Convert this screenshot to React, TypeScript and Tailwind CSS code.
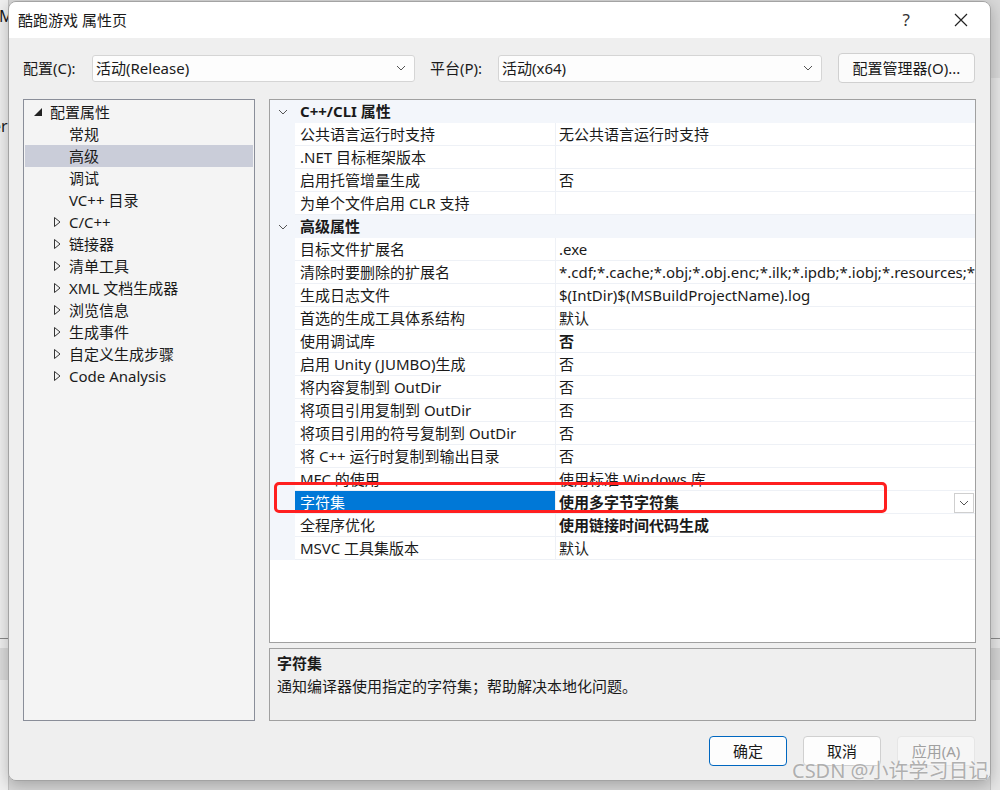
import React from "react";

const font = {
  fontFamily: '"Noto Sans", "Noto Sans CJK SC", sans-serif',
};

type TreeItem = { label: string; kind: "root" | "leaf" | "closed"; selected?: boolean };

const treeData: TreeItem[] = [
  { label: "配置属性", kind: "root" },
  { label: "常规", kind: "leaf" },
  { label: "高级", kind: "leaf", selected: true },
  { label: "调试", kind: "leaf" },
  { label: "VC++ 目录", kind: "leaf" },
  { label: "C/C++", kind: "closed" },
  { label: "链接器", kind: "closed" },
  { label: "清单工具", kind: "closed" },
  { label: "XML 文档生成器", kind: "closed" },
  { label: "浏览信息", kind: "closed" },
  { label: "生成事件", kind: "closed" },
  { label: "自定义生成步骤", kind: "closed" },
  { label: "Code Analysis", kind: "closed" },
];

type Row = { name: string; value?: string; bold?: boolean; category?: boolean; selected?: boolean };

const rows: Row[] = [
  { name: "C++/CLI 属性", category: true },
  { name: "公共语言运行时支持", value: "无公共语言运行时支持" },
  { name: ".NET 目标框架版本", value: "" },
  { name: "启用托管增量生成", value: "否" },
  { name: "为单个文件启用 CLR 支持", value: "" },
  { name: "高级属性", category: true },
  { name: "目标文件扩展名", value: ".exe" },
  { name: "清除时要删除的扩展名", value: "*.cdf;*.cache;*.obj;*.obj.enc;*.ilk;*.ipdb;*.iobj;*.resources;*.tlb;*.tli;*.tlh;*.tmp;*.rsp" },
  { name: "生成日志文件", value: "$(IntDir)$(MSBuildProjectName).log" },
  { name: "首选的生成工具体系结构", value: "默认" },
  { name: "使用调试库", value: "否", bold: true },
  { name: "启用 Unity (JUMBO)生成", value: "否" },
  { name: "将内容复制到 OutDir", value: "否" },
  { name: "将项目引用复制到 OutDir", value: "否" },
  { name: "将项目引用的符号复制到 OutDir", value: "否" },
  { name: "将 C++ 运行时复制到输出目录", value: "否" },
  { name: "MFC 的使用", value: "使用标准 Windows 库" },
  { name: "字符集", value: "使用多字节字符集", bold: true, selected: true },
  { name: "全程序优化", value: "使用链接时间代码生成", bold: true },
  { name: "MSVC 工具集版本", value: "默认" },
];

const Chevron = ({ className = "" }: { className?: string }) => (
  <svg width="10" height="6" viewBox="0 0 10 6" className={className}>
    <path d="M1 1 L5 5 L9 1" fill="none" stroke="#555" strokeWidth="1" />
  </svg>
);

const Combo = ({ text, width }: { text: string; width: string }) => (
  <div className={`${width} h-[27px] flex items-center justify-between bg-[#fdfdfd] border border-[#d5d5d5] rounded-[3px] pl-[3px] pr-[8px]`}>
    <span>{text}</span>
    <Chevron />
  </div>
);

const Tree = () => (
  <div className="w-[232px] h-[622px] bg-[#f4f4f4] border border-[#8a8e99] pt-[1px] px-[1px]">
    {treeData.map((item, i) => (
      <div key={i} className={`h-[22px] flex items-center relative ${item.selected ? "bg-[#cacdd9]" : ""}`}>
        {item.kind === "root" && (
          <>
            <svg width="8" height="8" viewBox="0 0 8 8" className="ml-[9px]">
              <path d="M8 0 L8 8 L0 8 Z" fill="#222" />
            </svg>
            <span className="ml-[8px]">{item.label}</span>
          </>
        )}
        {item.kind === "leaf" && <span className="ml-[44px]">{item.label}</span>}
        {item.kind === "closed" && (
          <>
            <svg width="7" height="10" viewBox="0 0 7 10" className="ml-[29px]">
              <path d="M0.5 0.5 L6 5 L0.5 9.5 Z" fill="none" stroke="#333" strokeWidth="1" />
            </svg>
            <span className="ml-[8px]">{item.label}</span>
          </>
        )}
      </div>
    ))}
  </div>
);

const Grid = () => (
  <div className="h-[544px] bg-white border border-[#a0a0a0] overflow-hidden">
    {rows.map((r, i) =>
      r.category ? (
        <div key={i} className="h-[23px] flex items-center bg-[#f3f6fb]">
          <div className="w-[25px] flex justify-center pl-[1px]">
            <Chevron />
          </div>
          <span className="pl-[5px] font-bold">{r.name}</span>
        </div>
      ) : (
        <div key={i} className="h-[23px] flex">
          <div className="w-[25px] bg-[#f3f6fb]" />
          <div
            className={`w-[260px] flex items-center pl-[5px] border-b border-[#eef1f6] whitespace-nowrap overflow-hidden ${
              r.selected ? "bg-[#0078d7] text-white" : ""
            }`}
          >
            {r.name}
          </div>
          <div className="flex-1 flex items-center border-l border-b border-[#eef1f6] pl-[3px] whitespace-nowrap overflow-hidden relative">
            <span className={r.bold ? "font-bold" : ""}>{r.value}</span>
            {r.selected && (
              <div className="absolute right-[1px] top-[2px] w-[20px] h-[20px] bg-white border border-[#cfcfcf] flex items-center justify-center">
                <Chevron />
              </div>
            )}
          </div>
        </div>
      )
    )}
  </div>
);

export default function App() {
  return (
    <div className="w-[1000px] h-[790px] bg-[#d9d9d9] relative overflow-hidden text-[15px] text-[#1a1a1a]" style={font}>
      {/* window behind the dialog */}
      <div className="absolute left-0 top-0 w-[9px] h-[790px] bg-[#f0f0f0] border-r border-[#c4c4c4]">
        <span className="absolute left-[-1px] top-[4px] text-[16px]">M</span>
        <span className="absolute left-[-8px] top-[114px] text-[16px]">er</span>
        <div className="absolute left-0 top-[638px] w-[9px] h-[1px] bg-[#8a8a8a]" />
        <div className="absolute left-0 top-[648px] w-[9px] h-[32px] bg-[#dcdcdc]" />
      </div>
      <div className="absolute left-[990px] top-[78px] w-[10px] h-[712px] bg-[#e6e6e6] border-l border-[#c4c4c4]">
        <div className="absolute left-0 top-[560px] w-[10px] h-[1px] bg-[#8a8a8a]" />
        <div className="absolute left-0 top-[570px] w-[10px] h-[32px] bg-[#d4d4d4]" />
      </div>

      {/* dialog */}
      <div className="absolute left-[8px] top-[1px] w-[983px] h-[780px] border border-[#a3a3a3] rounded-[8px] overflow-hidden flex flex-col shadow-[0_4px_16px_rgba(0,0,0,0.25)]">
        <div className="h-[36px] bg-white flex items-center pl-[9px] shrink-0">
          <span>酷跑游戏 属性页</span>
          <span className="ml-auto text-[17px] text-[#333] mr-[44px]">?</span>
          <svg width="14" height="14" viewBox="0 0 14 14" className="mr-[22px]">
            <path d="M1 1 L13 13 M13 1 L1 13" stroke="#222" strokeWidth="1.2" />
          </svg>
        </div>

        <div className="flex-1 bg-[#efefef] px-[14px] flex flex-col">
          <div className="mt-[15px] h-[30px] flex items-center">
            <span className="w-[69px]">配置(C):</span>
            <Combo text="活动(Release)" width="w-[323px]" />
            <span className="ml-[15px] w-[68px]">平台(P):</span>
            <Combo text="活动(x64)" width="w-[324px]" />
            <div className="ml-[16px] w-[137px] h-[30px] bg-[#fbfbfb] border border-[#d0d0d0] rounded-[4px] flex items-center justify-center">
              配置管理器(O)...
            </div>
          </div>

          <div className="mt-[16px] flex gap-[14px]">
            <Tree />
            <div className="w-[707px] flex flex-col gap-[5px]">
              <Grid />
              <div className="h-[73px] border border-[#a0a0a0] bg-[#efefef] px-[7px] pt-[2px]">
                <div className="font-bold leading-[24px]">字符集</div>
                <div className="leading-[22px]">通知编译器使用指定的字符集；帮助解决本地化问题。</div>
              </div>
            </div>
          </div>

          <div className="mt-[15px] flex justify-end gap-[16px] pr-[1px]">
            <div className="w-[78px] h-[30px] rounded-[4px] border border-[#0067c0] bg-[#fdfdfd] flex items-center justify-center">确定</div>
            <div className="w-[78px] h-[30px] rounded-[4px] border border-[#d0d0d0] bg-[#fdfdfd] flex items-center justify-center">取消</div>
            <div className="w-[78px] h-[30px] rounded-[4px] border border-[#e6e6e6] bg-[#f6f6f6] text-[#a0a0a0] flex items-center justify-center">应用(A)</div>
          </div>
        </div>
      </div>

      {/* annotation */}
      <div className="absolute left-[274px] top-[482px] w-[613px] h-[31px] border-[3px] border-[#ff1f1f] rounded-[5px]" />

      {/* watermark */}
      <div className="absolute left-[792px] top-[756px] text-[20px] text-[#a9a9a9] opacity-90 whitespace-nowrap [text-shadow:0_0_2px_#ffffff]">
        CSDN @小许学习日记
      </div>
    </div>
  );
}
